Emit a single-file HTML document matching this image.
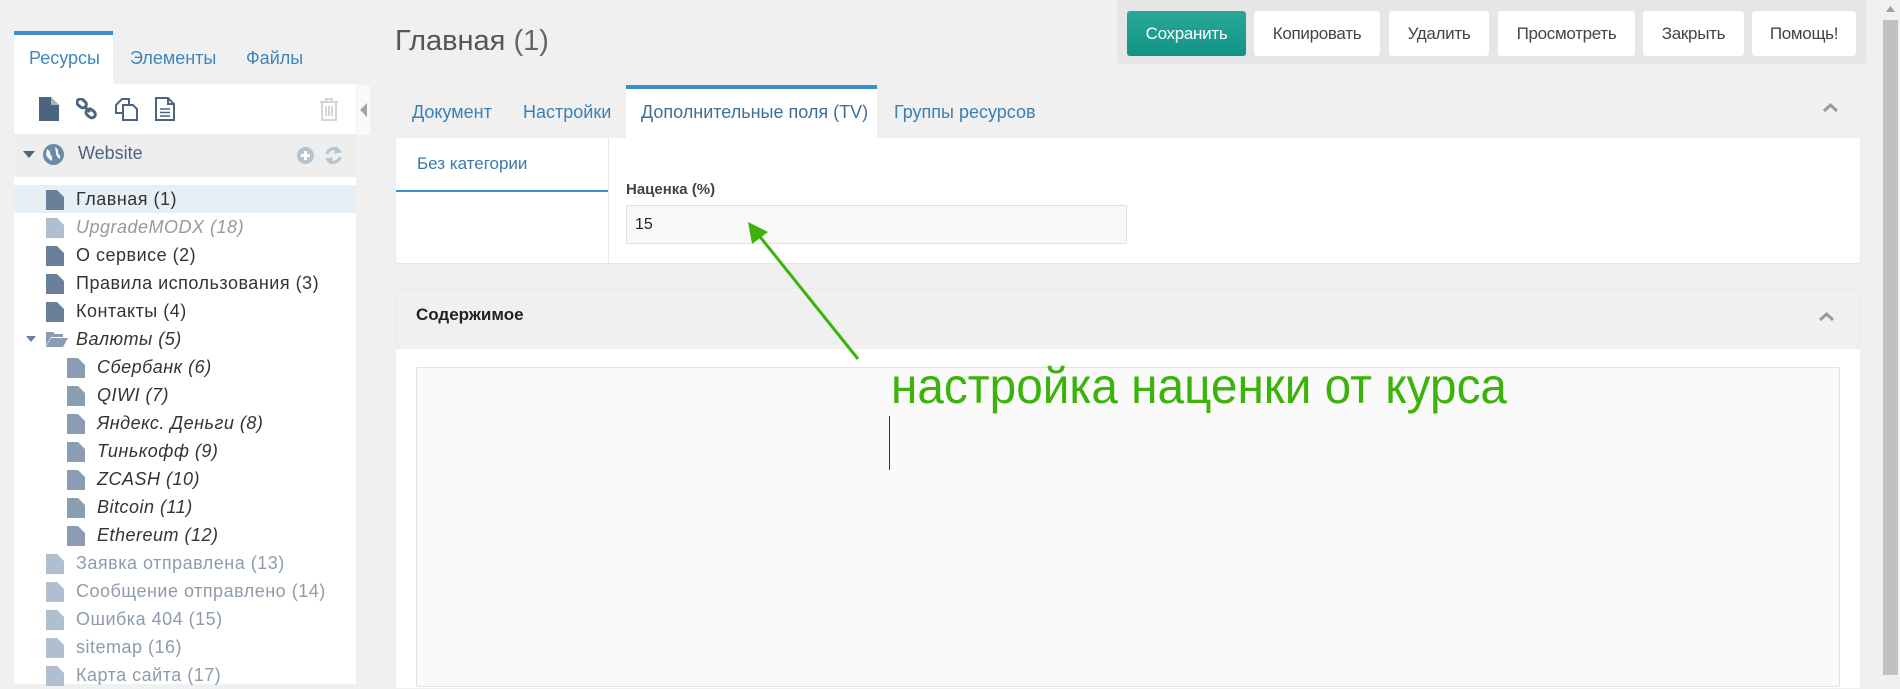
<!DOCTYPE html>
<html><head><meta charset="utf-8"><style>
*{box-sizing:border-box;margin:0;padding:0}
body{width:1900px;height:675px;overflow:hidden;background:#f0f0f0;font-family:"Liberation Sans",Arial,sans-serif;position:relative;color:#333}
.a{position:absolute}
.tabL{font-size:18px;color:#3b86bf;top:48px}
.row{position:absolute;left:14px;width:342px;height:28px;font-size:18px;letter-spacing:0.5px;line-height:28px}
.row svg{position:absolute;top:5px}
.btn{position:absolute;top:11px;height:45px;background:#fff;border-radius:3px;font-size:17px;color:#444;text-align:center;line-height:45px;letter-spacing:-0.3px}
.mt{position:absolute;top:102px;font-size:18px;color:#3b7fb3}
</style></head><body>

<div class="a" style="left:14px;top:31px;width:99px;height:54px;background:#fff;border-top:4px solid #3a8fc8"></div>
<div class="a tabL" style="left:29px">Ресурсы</div>
<div class="a tabL" style="left:130px">Элементы</div>
<div class="a tabL" style="left:246px">Файлы</div>

<div class="a" style="left:14px;top:84px;width:342px;height:600px;background:#fff"></div>
<div class="a" style="left:357px;top:85px;width:13px;height:50px;background:#fafafa;border-radius:0 3px 3px 0"></div>
<svg class="a" style="left:360px;top:103px" width="8" height="14"><path d="M7 0 L0 7 L7 14Z" fill="#9aa6b2"/></svg>

<svg class="a" style="left:39px;top:97px" width="20" height="24"><path d="M0 0 H12 L20 8 V24 H0Z" fill="#4d6480"/><path d="M12 0 V8 H20" fill="#fff" opacity=".5"/></svg>
<svg class="a" style="left:76px;top:98px" width="22" height="22" fill="none" stroke="#4d6480" stroke-width="3"><rect x="1" y="2" width="10" height="7" rx="3.5" transform="rotate(40 6 5)"/><rect x="10" y="12" width="10" height="7" rx="3.5" transform="rotate(40 15 15)"/><path d="M8 8 L14 14"/></svg>
<svg class="a" style="left:115px;top:97px" width="23" height="24" fill="#fff" stroke="#4d6480" stroke-width="2"><path d="M1 8 L7 2 H14 V16 H1Z"/><path d="M8 8 H18 L22 12 V23 H8Z"/></svg>
<svg class="a" style="left:155px;top:97px" width="20" height="24" fill="none" stroke="#4d6480" stroke-width="2"><path d="M1 1 H13 L19 7 V23 H1Z M13 1 V7 H19"/><path d="M5 12 H15 M5 15.5 H15 M5 19 H15" stroke-width="1.5"/></svg>
<svg class="a" style="left:319px;top:97px" width="20" height="24" fill="none" stroke="#d5d5d5" stroke-width="2"><path d="M1 5 H19 M7 5 V2 H13 V5 M3 5 V23 H17 V5 M7 9 V19 M10 9 V19 M13 9 V19"/></svg>

<div class="a" style="left:14px;top:134px;width:342px;height:43px;background:#eeeeee"></div>
<svg class="a" style="left:23px;top:151px" width="12" height="8"><path d="M0 0 H12 L6 7Z" fill="#4d6480"/></svg>
<svg class="a" style="left:43px;top:144px" width="21" height="21"><circle cx="10.5" cy="10.5" r="10.5" fill="#6a8aa8"/><path d="M4 5 Q8 7 7 10 Q10 12 9 17 Q5 15 3 11Z M12 3 Q16 5 15 9 Q18 12 17 15 Q13 13 13 9Z" fill="#fff" opacity=".9"/></svg>
<div class="a" style="left:78px;top:143px;font-size:18px;color:#4d6480">Website</div>
<svg class="a" style="left:297px;top:147px" width="17" height="17"><circle cx="8.5" cy="8.5" r="8.5" fill="#b3c4d1"/><path d="M8.5 4 V13 M4 8.5 H13" stroke="#fff" stroke-width="3"/></svg>
<svg class="a" style="left:324px;top:146px" width="19" height="19" fill="none" stroke="#b3c4d1" stroke-width="3"><path d="M3 8 A7 7 0 0 1 15 5"/><path d="M16 11 A7 7 0 0 1 4 14"/><path d="M12 1 L17 6 L11 7Z M7 18 L2 13 L8 12Z" fill="#b3c4d1" stroke-width="1"/></svg>

<div class="row" style="top:185px;background:#e6eef6"></div>

<div class="row" style="top:185px"><svg style="left:32px" width="18" height="20"><path d="M0 0H11L18 7V20H0Z" fill="#6a7f99"/></svg><span style="position:absolute;left:62px">Главная (1)</span></div>
<div class="row" style="top:213px"><svg style="left:32px" width="18" height="20"><path d="M0 0H11L18 7V20H0Z" fill="#b0bfcf"/></svg><span style="position:absolute;left:62px;font-style:italic;color:#999">UpgradeMODX (18)</span></div>
<div class="row" style="top:241px"><svg style="left:32px" width="18" height="20"><path d="M0 0H11L18 7V20H0Z" fill="#6a7f99"/></svg><span style="position:absolute;left:62px">О сервисе (2)</span></div>
<div class="row" style="top:269px"><svg style="left:32px" width="18" height="20"><path d="M0 0H11L18 7V20H0Z" fill="#6a7f99"/></svg><span style="position:absolute;left:62px">Правила использования (3)</span></div>
<div class="row" style="top:297px"><svg style="left:32px" width="18" height="20"><path d="M0 0H11L18 7V20H0Z" fill="#6a7f99"/></svg><span style="position:absolute;left:62px">Контакты (4)</span></div>
<div class="row" style="top:325px"><svg style="left:12px;top:11px" width="10" height="7"><path d="M0 0H10L5 6Z" fill="#6a7f99"/></svg><svg style="left:32px;top:6px" width="22" height="16"><path d="M0 1H7L9 3H17V6H5L0 15Z" fill="#8a9db3"/><path d="M5 7H22L17 16H0Z" fill="#8a9db3"/></svg><span style="position:absolute;left:62px;font-style:italic">Валюты (5)</span></div>
<div class="row" style="top:353px"><svg style="left:53px" width="18" height="20"><path d="M0 0H11L18 7V20H0Z" fill="#8a9db3"/></svg><span style="position:absolute;left:83px;font-style:italic">Сбербанк (6)</span></div>
<div class="row" style="top:381px"><svg style="left:53px" width="18" height="20"><path d="M0 0H11L18 7V20H0Z" fill="#8a9db3"/></svg><span style="position:absolute;left:83px;font-style:italic">QIWI (7)</span></div>
<div class="row" style="top:409px"><svg style="left:53px" width="18" height="20"><path d="M0 0H11L18 7V20H0Z" fill="#8a9db3"/></svg><span style="position:absolute;left:83px;font-style:italic">Яндекс. Деньги (8)</span></div>
<div class="row" style="top:437px"><svg style="left:53px" width="18" height="20"><path d="M0 0H11L18 7V20H0Z" fill="#8a9db3"/></svg><span style="position:absolute;left:83px;font-style:italic">Тинькофф (9)</span></div>
<div class="row" style="top:465px"><svg style="left:53px" width="18" height="20"><path d="M0 0H11L18 7V20H0Z" fill="#8a9db3"/></svg><span style="position:absolute;left:83px;font-style:italic">ZCASH (10)</span></div>
<div class="row" style="top:493px"><svg style="left:53px" width="18" height="20"><path d="M0 0H11L18 7V20H0Z" fill="#8a9db3"/></svg><span style="position:absolute;left:83px;font-style:italic">Bitcoin (11)</span></div>
<div class="row" style="top:521px"><svg style="left:53px" width="18" height="20"><path d="M0 0H11L18 7V20H0Z" fill="#8a9db3"/></svg><span style="position:absolute;left:83px;font-style:italic">Ethereum (12)</span></div>
<div class="row" style="top:549px;color:#8e9bab"><svg style="left:32px" width="18" height="20"><path d="M0 0H11L18 7V20H0Z" fill="#b0bfcf"/></svg><span style="position:absolute;left:62px">Заявка отправлена (13)</span></div>
<div class="row" style="top:577px;color:#8e9bab"><svg style="left:32px" width="18" height="20"><path d="M0 0H11L18 7V20H0Z" fill="#b0bfcf"/></svg><span style="position:absolute;left:62px">Сообщение отправлено (14)</span></div>
<div class="row" style="top:605px;color:#8e9bab"><svg style="left:32px" width="18" height="20"><path d="M0 0H11L18 7V20H0Z" fill="#b0bfcf"/></svg><span style="position:absolute;left:62px">Ошибка 404 (15)</span></div>
<div class="row" style="top:633px;color:#8e9bab"><svg style="left:32px" width="18" height="20"><path d="M0 0H11L18 7V20H0Z" fill="#b0bfcf"/></svg><span style="position:absolute;left:62px">sitemap (16)</span></div>
<div class="row" style="top:661px;color:#8e9bab"><svg style="left:32px" width="18" height="20"><path d="M0 0H11L18 7V20H0Z" fill="#b0bfcf"/></svg><span style="position:absolute;left:62px">Карта сайта (17)</span></div>

<div class="a" style="left:395px;top:25px;font-size:29px;color:#555">Главная <span style="color:#666">(1)</span></div>

<div class="a" style="left:1117px;top:0;width:749px;height:64px;background:#e6e6e6;border-radius:0 0 4px 4px"></div>
<div class="btn" style="left:1127px;width:119px;background:linear-gradient(#2aa89a,#0f9486);color:#fff">Сохранить</div>
<div class="btn" style="left:1254px;width:126px">Копировать</div>
<div class="btn" style="left:1389px;width:100px">Удалить</div>
<div class="btn" style="left:1498px;width:137px">Просмотреть</div>
<div class="btn" style="left:1643px;width:101px">Закрыть</div>
<div class="btn" style="left:1752px;width:104px">Помощь!</div>

<div class="a" style="left:1881px;top:0;width:19px;height:675px;background:#f1f1f1"></div>
<div class="a" style="left:1883px;top:20px;width:15px;height:655px;background:#c1c1c1"></div>
<svg class="a" style="left:1886px;top:6px" width="9" height="6"><path d="M0 6H9L4.5 0Z" fill="#a0a0a0"/></svg>

<div class="a" style="left:626px;top:85px;width:251px;height:54px;background:#fff;border-top:4px solid #3a8fc8"></div>
<div class="mt" style="left:412px">Документ</div>
<div class="mt" style="left:523px">Настройки</div>
<div class="mt" style="left:641px;color:#3d6e99">Дополнительные поля (TV)</div>
<div class="mt" style="left:894px">Группы ресурсов</div>
<svg class="a" style="left:1822px;top:102px" width="17" height="11"><path d="M2 9 L8.5 3 L15 9" fill="none" stroke="#999" stroke-width="3"/></svg>

<div class="a" style="left:396px;top:138px;width:1464px;height:125px;background:#fff;border-radius:0 0 3px 3px;box-shadow:0 1px 2px rgba(0,0,0,.06)"></div>
<div class="a" style="left:608px;top:138px;width:1px;height:125px;background:#e8e8e8"></div>
<div class="a" style="left:396px;top:190px;width:212px;height:2px;background:#3a8fc8"></div>
<div class="a" style="left:417px;top:154px;font-size:17px;color:#3d78a8">Без категории</div>
<div class="a" style="left:626px;top:181px;font-size:15px;font-weight:bold;color:#444">Наценка (%)</div>
<div class="a" style="left:626px;top:205px;width:501px;height:39px;background:#f8f8f8;border:1px solid #e0e0e0;border-radius:2px;font-size:16px;line-height:37px;padding-left:8px;color:#222">15</div>

<div class="a" style="left:396px;top:288px;width:1464px;height:400px;background:#fff;border-radius:3px 3px 0 0"></div>
<div class="a" style="left:396px;top:288px;width:1464px;height:61px;background:#f0f0f0;border-radius:3px 3px 0 0;border:1px solid #eaeaea;border-bottom:none"></div>
<div class="a" style="left:416px;top:305px;font-size:17px;font-weight:bold;color:#222">Содержимое</div>
<svg class="a" style="left:1818px;top:311px" width="17" height="11"><path d="M2 9 L8.5 3 L15 9" fill="none" stroke="#999" stroke-width="3"/></svg>
<div class="a" style="left:416px;top:367px;width:1424px;height:320px;background:#fafafa;border:1px solid #e2e2e2;border-radius:2px"></div>
<div class="a" style="left:889px;top:416px;width:1px;height:54px;background:#333"></div>

<svg class="a" style="left:0;top:0" width="1900" height="675">
<text x="891" y="403" font-family="Liberation Sans, sans-serif" font-size="50" fill="#3cb30a" textLength="616" lengthAdjust="spacingAndGlyphs">настройка наценки от курса</text>
<line x1="858" y1="359" x2="757" y2="233" stroke="#3cb30a" stroke-width="3"/>
<path d="M748 222 L768 232 L752 244Z" fill="#3cb30a"/>
</svg>
</body></html>
